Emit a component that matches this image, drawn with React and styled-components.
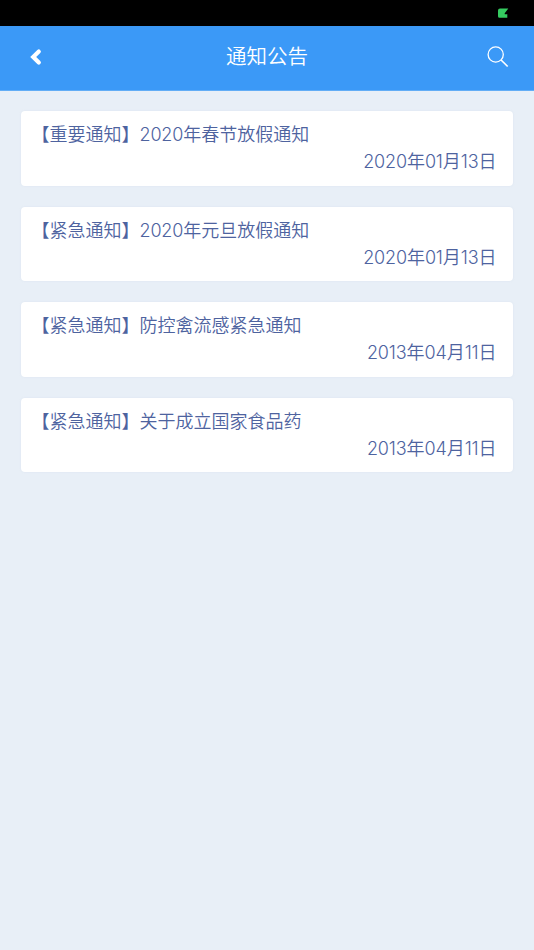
import React from 'react';
import styled, { createGlobalStyle } from 'styled-components';

const GlobalStyle = createGlobalStyle`
  * {
    box-sizing: border-box;
  }

  body {
    margin: 0;
    background-color: #e8eff7;
    font-family: 'Inter', 'Noto Sans CJK SC', sans-serif;
    font-weight: 350;
  }
`;

const Page = styled.div`
  min-height: 950px;
  background-color: #e8eff7;
`;

const StatusBar = styled.div`
  height: 26px;
  padding: 8px 25px 0 0;
  display: flex;
  justify-content: flex-end;
  align-items: flex-start;
  background-color: #000;
`;

const Header = styled.header`
  height: 65px;
  padding: 0 25px 2px 29px;
  display: flex;
  justify-content: space-between;
  align-items: center;
  background-color: #3b99f7;
  border-bottom: 1px solid #62adf6;
`;

const HeaderButton = styled.button`
  width: 22px;
  height: 22px;
  padding: 0;
  display: flex;
  justify-content: flex-start;
  align-items: center;
  border: none;
  background: none;
  color: #fff;
  cursor: pointer;
`;

const Title = styled.h1`
  margin: 0;
  padding: 0 4px 4px 0;
  color: #fff;
  font-family: 'Noto Sans CJK SC', sans-serif;
  font-size: 20.5px;
  font-weight: 350;
  line-height: 30px;
`;

const NoticeList = styled.main`
  padding: 20px 21px;
  display: flex;
  flex-direction: column;
  gap: 20.75px;
`;

const NoticeCard = styled.article`
  height: 74.75px;
  padding: 10.4px 16.5px 0 10.5px;
  border-radius: 4px;
  background-color: #fff;
  box-shadow: 0 0 2px rgba(160, 180, 210, 0.18);
  color: #4e639f;
  font-size: 18px;
  line-height: 27px;
  white-space: nowrap;
`;

const NoticeTitle = styled.div`
  height: 27px;
`;

const NoticeDate = styled.div`
  height: 27px;
  text-align: right;
`;

const Digits = styled.span`
  font-weight: 330;
  letter-spacing: -0.15px;
`;

const notices = [
  { id: 1, title: '【重要通知】2020年春节放假通知', date: '2020年01月13日' },
  { id: 2, title: '【紧急通知】2020年元旦放假通知', date: '2020年01月13日' },
  { id: 3, title: '【紧急通知】防控禽流感紧急通知', date: '2013年04月11日' },
  { id: 4, title: '【紧急通知】关于成立国家食品药', date: '2013年04月11日' },
];

// Numbers are set a little tighter than the Chinese text around them
const withDigits = text =>
  text
    .split(/(\d+)/)
    .map((part, i) => (/^\d+$/.test(part) ? <Digits key={i}>{part}</Digits> : part));

const App = () => {
  return (
    <>
      <GlobalStyle />
      <Page>
        <StatusBar>
          <svg width="12" height="11" viewBox="0 0 12 11">
            <path
              d="M3 .5H11.3L7.7 5.2V6.3H10.3V9.7H2.5Q1 9.7 1 8.2V2.5Q1 .5 3 .5Z"
              fill="#35cb60"
            />
          </svg>
        </StatusBar>
        <Header>
          <HeaderButton aria-label="返回">
            <svg width="14" height="18" viewBox="0 0 14 18" fill="none">
              <path
                d="M9.8 3.6L4.2 9L9.8 14.6"
                stroke="currentColor"
                strokeWidth="4.2"
                strokeLinecap="round"
              />
            </svg>
          </HeaderButton>
          <Title>通知公告</Title>
          <HeaderButton aria-label="搜索">
            <svg width="22" height="22" viewBox="0 0 22 22" fill="none">
              <circle cx="8.7" cy="8.5" r="7.6" stroke="currentColor" strokeWidth="1.3" />
              <path d="M14.1 14L20.7 20.5" stroke="currentColor" strokeWidth="1.7" />
            </svg>
          </HeaderButton>
        </Header>
        <NoticeList>
          {notices.map(notice => (
            <NoticeCard key={notice.id}>
              <NoticeTitle>{withDigits(notice.title)}</NoticeTitle>
              <NoticeDate>{withDigits(notice.date)}</NoticeDate>
            </NoticeCard>
          ))}
        </NoticeList>
      </Page>
    </>
  );
};

export default App;
